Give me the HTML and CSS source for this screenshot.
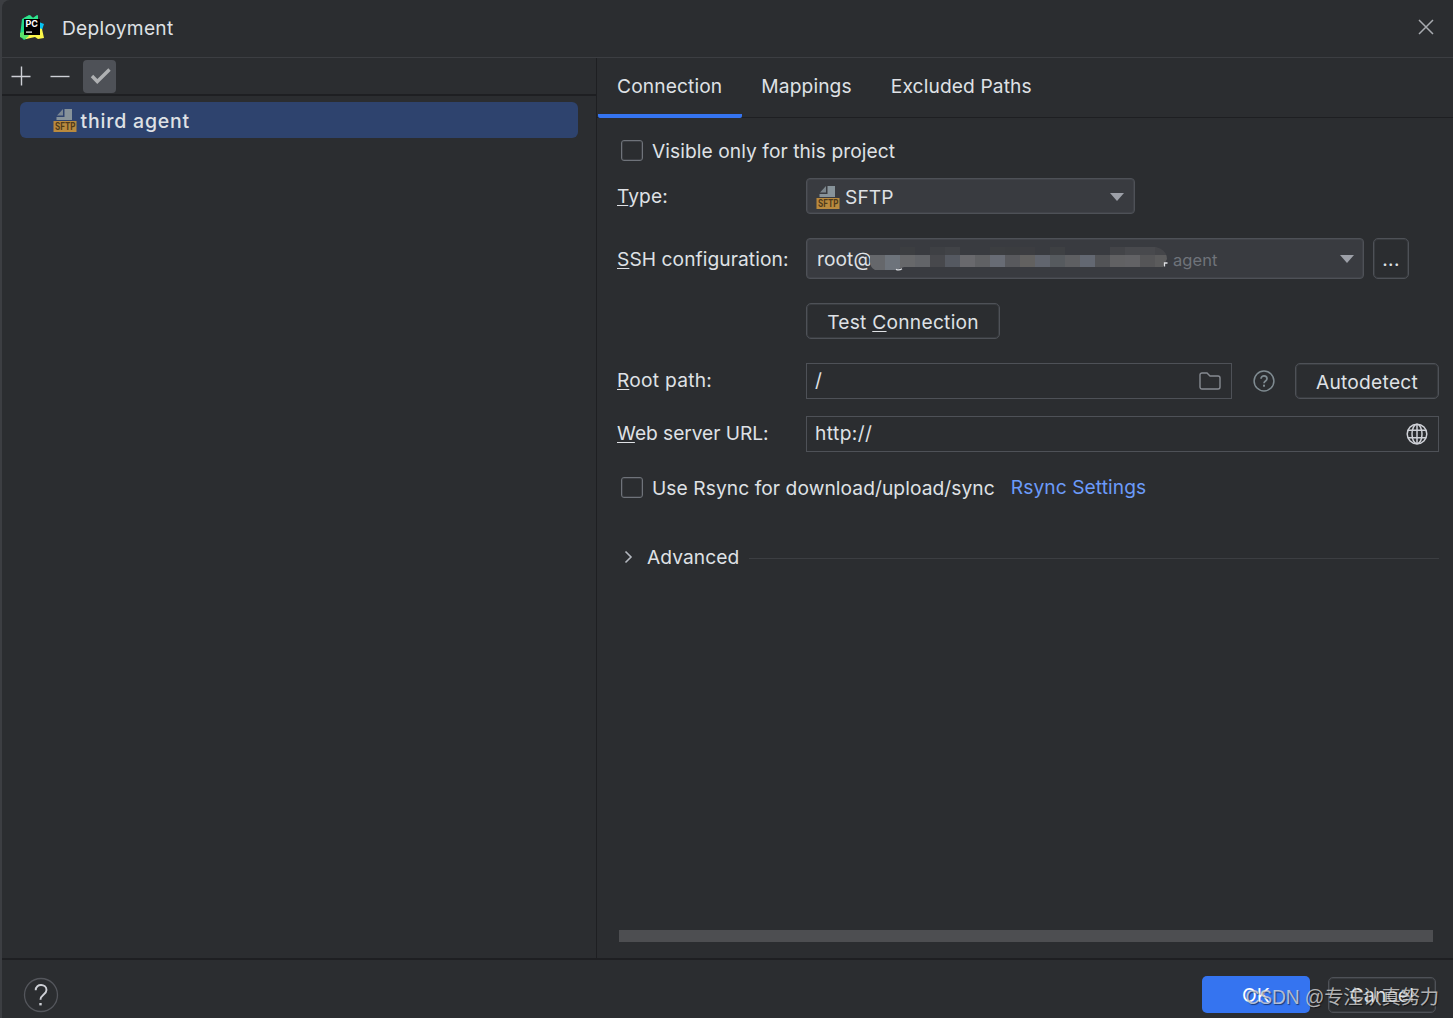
FILE: index.html
```html
<!DOCTYPE html>
<html lang="en">
<head>
  <meta charset="UTF-8">
  <meta name="viewport" content="width=device-width, initial-scale=1.0">
  <title>Deployment</title>
  <link rel="stylesheet" href="styles.css">
</head>
<body>

  <div class="dialog">
    <div class="title-bar">
      <svg class="logo" width="24" height="25" viewBox="0 0 24 25">
        <path d="M2 4 9 0l4 3 4-3 1 5-4 15-10 5-4-4z" fill="#21d789"/>
        <path d="M4 3 10 0l3 3 5-3v6H5z" fill="#2ee58c"/>
        <path d="M19 7l5 2-2 6-3 2z" fill="#07c3f2"/>
        <path d="M19 13l3 1 2 9-6 1-3-2-9 2-2-3 9-4z" fill="#fcf84a"/>
        <path d="M0 18l5-2 4 5-4 3-5-2z" fill="#5be06b"/>
        <rect x="4" y="4" width="16" height="16" fill="#000"/>
        <text x="5.500" y="12" class="logo-text">PC</text>
        <rect x="6" y="16.500" width="6" height="1.200" fill="#fff"/>
      </svg>
      <span class="title">Deployment</span>
      <svg class="close" width="16" height="16" viewBox="0 0 16 16"><path d="M1 1l14 14M15 1L1 15" stroke="#a8abb0" stroke-width="1.500"/></svg>
    </div>

    <div class="content">
      <div class="sidebar">
        <div class="toolbar">
          <svg width="20" height="20" viewBox="0 0 20 20"><path d="M10.500 .5v19M.5 10.500h19" stroke="#ced0d6" stroke-width="1.400"/></svg>
          <svg width="20" height="20" viewBox="0 0 20 20"><path d="M.5 10.500h19" stroke="#ced0d6" stroke-width="1.400"/></svg>
          <span class="tool-active">
            <svg width="22" height="18" viewBox="0 0 22 18"><path d="M3 9l5.300 5.500L20.500 2.500" fill="none" stroke="#afb1b3" stroke-width="3.400"/></svg>
          </span>
        </div>
        <div class="server">
          <svg class="sftp" width="24" height="24" viewBox="0 0 24 24">
            <path d="M4 7.500 10 1v6.500z" fill="#87939a" opacity=".85"/>
            <path d="M11.500 1H19v11H3.500V9h8z" fill="#87939a"/>
            <rect x="0.500" y="13" width="23" height="11" fill="#b98a3e"/>
            <text x="2" y="22" class="sftp-text" textLength="20.500" lengthAdjust="spacingAndGlyphs">SFTP</text>
          </svg>
          <span>third agent</span>
        </div>
      </div>

      <div class="main">
        <div class="tabs">
          <div class="tab tab-active">Connection</div>
          <div class="tab">Mappings</div>
          <div class="tab">Excluded Paths</div>
        </div>

        <div class="form">
          <div class="check-row">
            <span class="checkbox"></span>
            <span>Visible only for this project</span>
          </div>

          <div class="row row-type">
            <label class="label"><u>T</u>ype:</label>
            <div class="combo combo-type">
              <svg class="sftp" width="24" height="24" viewBox="0 0 24 24">
                <path d="M4 7.500 10 1v6.500z" fill="#87939a" opacity=".85"/>
                <path d="M11.500 1H19v11H3.500V9h8z" fill="#87939a"/>
                <rect x="0.500" y="13" width="23" height="11" fill="#b98a3e"/>
                <text x="2" y="22" class="sftp-text" textLength="20.500" lengthAdjust="spacingAndGlyphs">SFTP</text>
              </svg>
              <span>SFTP</span>
              <span class="arrow"></span>
            </div>
          </div>

          <div class="row row-ssh">
            <label class="label"><u>S</u>SH configuration:</label>
            <div class="combo combo-ssh">
              <span class="user">root@</span>
              <svg class="mosaic" width="299" height="24" viewBox="0 0 299 24">
                <clipPath id="strip"><path d="M0 0h286q11 3 11 12l-4 8H34l-8 3H5q-5-3-5-8z"/></clipPath>
                <g id="mosaic" clip-path="url(#strip)"></g>
                <path d="M26 22.300q3 1.500 6-.5M294.500 19.500v-3.500h3" fill="none" stroke="#dfe1e5" stroke-width="1.300"/>
              </svg>
              <span class="hint">agent</span>
              <span class="arrow"></span>
            </div>
            <div class="btn btn-more">...</div>
          </div>

          <div class="row row-test">
            <label class="label"></label>
            <div class="btn btn-test">Test&nbsp;<u>C</u>onnection</div>
          </div>

          <div class="row row-root">
            <label class="label"><u>R</u>oot path:</label>
            <div class="input input-root">
              <span>/</span>
              <svg width="22" height="18" viewBox="0 0 22 18"><path d="M1 3a2 2 0 0 1 2-2h5l3 3h8a2 2 0 0 1 2 2v9a2 2 0 0 1-2 2H3a2 2 0 0 1-2-2z" fill="none" stroke="#868a91" stroke-width="1.400"/></svg>
            </div>
            <svg class="help-small" width="22" height="22" viewBox="0 0 22 22">
              <circle cx="11" cy="11" r="9.900" fill="none" stroke="#7f8b91" stroke-width="1.500"/>
              <path d="M8 8.800C8 4.900 14 5 14 8.800c0 2.200-3 2.200-3 4.500" fill="none" stroke="#7f8b91" stroke-width="1.700"/>
              <rect x="10" y="14.700" width="2" height="2" fill="#7f8b91"/>
            </svg>
            <div class="btn btn-auto">Autodetect</div>
          </div>

          <div class="row row-url">
            <label class="label"><u>W</u>eb server URL:</label>
            <div class="input input-url">
              <span>http://</span>
              <svg width="22" height="22" viewBox="0 0 22 22"><g fill="none" stroke="#ced0d6" stroke-width="1.500"><circle cx="11" cy="11" r="9.800"/><ellipse cx="11" cy="11" rx="5" ry="9.800"/><path d="M11 1v20M2 7.200h18M2 14.800h18"/></g></svg>
            </div>
          </div>

          <div class="check-row row-rsync">
            <span class="checkbox"></span>
            <span>Use Rsync for download/upload/sync</span>
            <a class="link">Rsync Settings</a>
          </div>

          <div class="advanced">
            <svg width="9" height="14" viewBox="0 0 9 14"><path d="M1.500 1.500L7 7l-5.500 5.500" fill="none" stroke="#b4b8bf" stroke-width="1.600"/></svg>
            <span class="advanced-title">Advanced</span>
            <span class="line"></span>
          </div>

          <div class="scrollbar"></div>
        </div>
      </div>
    </div>

    <div class="footer">
      <svg width="36" height="36" viewBox="0 0 36 36">
        <circle cx="18" cy="18" r="16.500" fill="none" stroke="#54565c" stroke-width="1.300"/>
        <path d="M12.700 13.200C12.700 6 23.500 6.500 23.500 13c0 4.500-6 4.500-6 9.700" fill="none" stroke="#ced0d6" stroke-width="1.900"/>
        <rect x="16.300" y="26" width="2.400" height="2.400" fill="#ced0d6"/>
      </svg>
      <div class="btn btn-ok">OK</div>
      <div class="btn btn-cancel">Cancel</div>
    </div>
    <div class="watermark">CSDN @专注认真努力</div>
  </div>

  <script src="mosaic.js"></script>
</body>
</html>
```
FILE: mosaic.js
```js
// pixelated strip over the host name, one color per 15px block
const colors = ['#65676b', '#6d737b', '#67686a', '#626468', '#47484c', '#555961', '#69696d', '#606164',
  '#686c75', '#58595d', '#626160', '#61656e', '#565a5e', '#5e5f62', '#636872', '#525356', '#616163', '#626265', '#555557', '#5b5b5c'];
const tops = { 2: '#3c3e41', 4: '#3e4044', 5: '#414347', 8: '#3c3e41', 9: '#3b3d40', 10: '#3c3d41', 12: '#3e4043', 16: '#434448', 17: '#48494d', 18: '#48494d', 19: '#444549' };
const g = document.getElementById('mosaic');

function block(x, y, w, h, fill) {
  const r = document.createElementNS('http://www.w3.org/2000/svg', 'rect');
  r.setAttribute('x', x);
  r.setAttribute('y', y);
  r.setAttribute('width', w);
  r.setAttribute('height', h);
  r.setAttribute('fill', fill);
  g.appendChild(r);
}

colors.forEach((color, i) => {
  // the first blocks also cover the descenders
  block(i * 15, 8, 15, i < 3 ? 15 : 12, color);
  if (tops[i]) block(i * 15, 0, 15, 8, tops[i]);
});
```
FILE: styles.css
```css
* {
  box-sizing: border-box;
}
body {
  margin: 0;
  background-color: #3c3e42;
  color: #dfe1e5;
  font-family: Inter, sans-serif;
  font-size: 19.2px;
  letter-spacing: 0.07px;
  line-height: 24px;
  overflow: hidden;
}
svg {
  display: block;
  flex-shrink: 0;
}
u {
  text-decoration-thickness: 1px;
  text-underline-offset: 2px;
  text-decoration-skip-ink: none;
}
.dialog {
  position: relative;
  display: flex;
  flex-direction: column;
  height: 1018px;
  margin-left: 2px;
  background-color: #2b2d30;
  border-top-left-radius: 8px;
}
.title-bar {
  display: flex;
  align-items: center;
  height: 58px;
  padding: 0 19px 2px 18px;
  border-bottom: 1px solid #3c3e42;
}
.title {
  margin-left: 18px;
  letter-spacing: 0.25px;
}
.close {
  margin: 0 0 2px auto;
}
.logo-text {
  font-size: 9px;
  font-weight: 700;
  letter-spacing: 0;
  fill: #fff;
}
.sftp {
  overflow: visible;
}
.sftp-text {
  font-size: 10px;
  font-weight: 700;
  letter-spacing: 0;
  fill: #503b1b;
}
.content {
  display: flex;
  height: 900px;
}
.sidebar {
  width: 595px;
  border-right: 1px solid #1e1f22;
}
.toolbar {
  display: flex;
  align-items: center;
  gap: 19px;
  height: 38px;
  padding-left: 9px;
  border-bottom: 2px solid #1e1f22;
}
.tool-active {
  display: flex;
  align-items: center;
  justify-content: center;
  width: 33px;
  height: 33px;
  margin-left: -6px;
  border-radius: 4px;
  background-color: #4e5157;
}
.server {
  display: flex;
  align-items: center;
  gap: 4px;
  height: 36px;
  margin: 6px 18px 0;
  padding: 1px 0 0 32.5px;
  border-radius: 6px;
  background-color: #2e436e;
  font-size: 19.5px;
  font-weight: 500;
  letter-spacing: 0.8px;
}
.server .sftp {
  margin-bottom: 1px;
}
.main {
  flex: 1;
}
.tabs {
  display: flex;
  height: 60px;
  padding-left: 1px;
  border-bottom: 1px solid #1e1f22;
}
.tab {
  height: 60px;
  padding: 16px 20px 0 19px;
  letter-spacing: 0.12px;
}
.tab-active {
  border-bottom: 4px solid #3574f0;
  border-radius: 2px;
}
.form {
  padding: 21px 14px 0 20px;
}
.check-row {
  display: flex;
  align-items: center;
  height: 24px;
  padding-left: 4px;
}
.checkbox {
  width: 22px;
  height: 21px;
  margin: 0 9px 1px 0;
  border: 1px solid #6f737a;
  border-radius: 3px;
  box-shadow: inset 0 0 0 1px rgba(111, 115, 122, 0.25);
}
.row {
  display: flex;
  align-items: center;
}
.label {
  width: 189px;
  flex-shrink: 0;
}
.combo {
  display: flex;
  align-items: center;
  border: 1px solid #4e5157;
  border-radius: 4px;
  background-color: #393b40;
  box-shadow: inset 0 0 0 1px rgba(78, 81, 87, 0.4);
}
.arrow {
  margin-left: auto;
  border: 7px solid transparent;
  border-top: 8px solid #9da0a8;
  border-bottom: 0;
}
.row-type {
  height: 36px;
  margin-top: 15px;
}
.combo-type {
  width: 329px;
  height: 36px;
  padding: 1px 10px 0 9px;
  gap: 5px;
}
.row-ssh {
  height: 41px;
  margin-top: 24px;
}
.combo-ssh {
  width: 558px;
  height: 41px;
  padding: 1px 9px 0 10px;
}
.user {
  width: 56px;
}
.mosaic {
  margin-left: -3px;
}
.hint {
  margin: 2px 0 0 4px;
  color: #6f737a;
  font-size: 16.5px;
}
.btn {
  display: flex;
  align-items: center;
  justify-content: center;
  height: 36px;
  padding-top: 2px;
  border: 1px solid #4e5157;
  border-radius: 5px;
  box-shadow: inset 0 0 0 1px rgba(78, 81, 87, 0.4);
  letter-spacing: 0.25px;
}
.btn-more {
  width: 36px;
  height: 41px;
  margin-left: 9px;
  padding-top: 0;
}
.row-test {
  margin-top: 24px;
}
.btn-test {
  width: 194px;
}
.input {
  display: flex;
  align-items: center;
  justify-content: space-between;
  height: 36px;
  padding: 0 10px 0 8px;
  border: 1px solid #4e5157;
  letter-spacing: 0.4px;
}
.row-root {
  margin-top: 24px;
}
.row-root .label {
  margin-bottom: 2px;
  letter-spacing: 0.25px;
}
.input-root {
  width: 426px;
}
.input-root span {
  margin-bottom: 2px;
}
.help-small {
  margin: 0 20px 0 21px;
}
.btn-auto {
  flex: 1;
}
.row-url {
  margin-top: 17px;
}
.row-url .label,
.input-url span {
  margin-bottom: 2px;
}
.row-url .label {
  letter-spacing: -0.05px;
}
.input-url {
  flex: 1;
}
.row-rsync {
  margin-top: 24px;
}
.link {
  margin: 0 0 2px 16px;
  color: #6b9bfa;
}
.advanced {
  display: flex;
  align-items: center;
  margin-top: 45px;
  padding-left: 7px;
}
.advanced-title {
  margin: 0 10px 0 14px;
}
.line {
  flex: 1;
  height: 1px;
  margin-top: 2px;
  background-color: #3c3e42;
}
.scrollbar {
  height: 12px;
  margin: 361px 6px 0 2px;
  background-color: #4d4e51;
}
.footer {
  display: flex;
  align-items: center;
  height: 60px;
  padding: 12px 17px 0 21px;
  border-top: 2px solid #1e1f22;
}
.btn-ok {
  width: 108px;
  height: 37px;
  margin: 0 0 1px auto;
  padding-top: 0;
  border: none;
  box-shadow: none;
  background-color: #3574f0;
  color: #fff;
}
.btn-cancel {
  width: 108px;
  margin: 0 0 1px 18px;
  padding-top: 0;
}
.watermark {
  position: absolute;
  right: 14px;
  bottom: 8px;
  color: rgba(225, 225, 225, 0.75);
  font-family: "Liberation Sans", "Noto Sans CJK SC", sans-serif;
  font-size: 19.3px;
  letter-spacing: -0.15px;
  text-shadow: 1px 1px 1px rgba(0, 0, 0, 0.5);
}
```
